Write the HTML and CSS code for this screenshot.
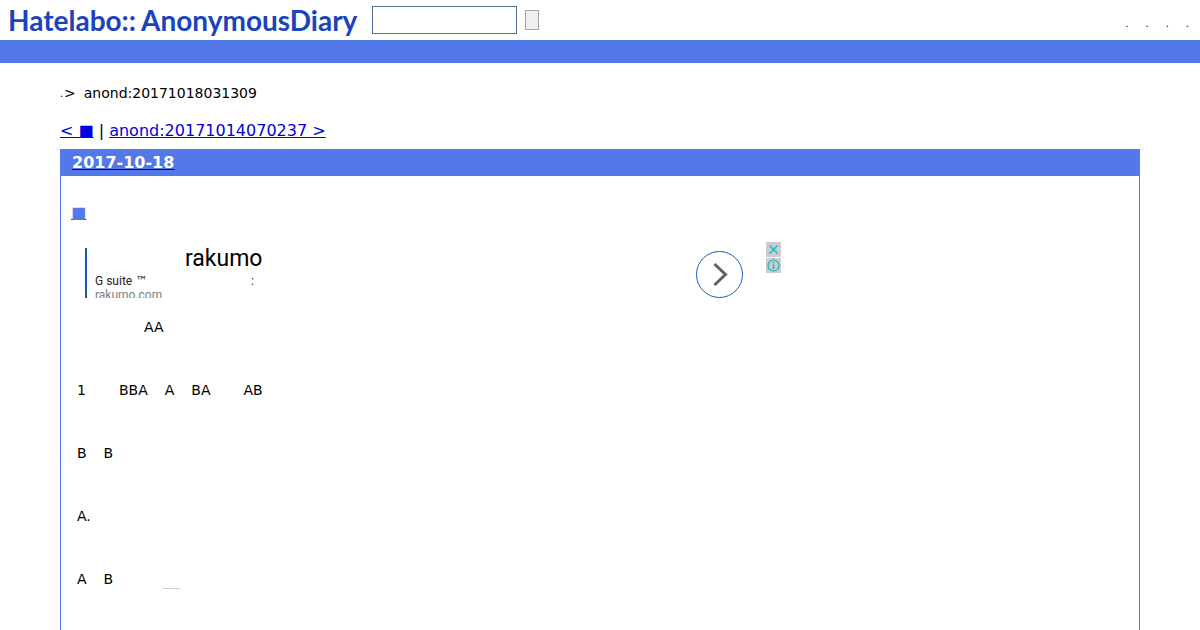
FILE: index.html
```html
<!DOCTYPE html>
<html lang="en">
<head>
<meta charset="utf-8">
<title>Hatelabo::AnonymousDiary</title>
<link rel="stylesheet" href="styles.css">
</head>
<body>
<header class="header">
  <h1 class="logo"><span>Hatelabo::</span><span>AnonymousDiary</span></h1>
  <form class="search">
    <input class="search-box" type="text" aria-label="Search">
    <button class="search-button" type="button" aria-label="Submit search"></button>
  </form>
  <div class="menu"><span>.</span><span>.</span><span>.</span><span>.</span></div>
</header>
<div class="bar"></div>
<main class="main">
  <div class="crumbs"><span class="dot">.</span><span>&gt;</span><span class="current">anond:20171018031309</span></div>
  <nav class="pager"><a href="#prev">&lt; ■</a> | <a href="#next">anond:20171014070237 &gt;</a></nav>
  <article class="day">
    <h2 class="date"><a href="#day">2017-10-18</a></h2>
    <div class="body">
      <h3 class="mark"><a href="#entry">■</a></h3>
      <div class="ad">
        <div class="ad-text">
          <div class="ad-title">rakumo</div>
          <div class="ad-line"><span>G suite <span class="tm">™</span></span><span>:</span></div>
          <div class="ad-site">rakumo.com</div>
        </div>
        <a class="ad-go" href="#ad" aria-label="Open">
          <svg width="47" height="47" viewBox="0 0 47 47" fill="none"><circle cx="23.5" cy="23.5" r="23" stroke="#175ebc"/><path d="M18.5 13 29.5 23.5 18.5 34" stroke="#616161" stroke-width="3"/></svg>
        </a>
        <div class="ad-marks">
          <button type="button" aria-label="Close"><svg width="15" height="15" viewBox="0 0 15 15" fill="none" stroke="#16b0cb" stroke-width="1.2"><path d="m3.5 3.5 8 8m0-8-8 8"/></svg></button>
          <button type="button" aria-label="Ad information"><svg width="15" height="15" viewBox="0 0 15 15" fill="none" stroke="#16b0cb" stroke-width="1.2"><circle cx="7.5" cy="7.5" r="5.5"/><path d="M7.5 6.5v4.5M7.5 4v1.3" stroke-width="1.5"/></svg></button>
        </div>
      </div>
      <div class="lines">
        <p class="line"><span class="far">AA</span></p>
        <p class="line"><span>1</span><span class="wide">BBA</span><span>A</span><span>BA</span><span class="wide">AB</span></p>
        <p class="line"><span>B</span><span>B</span></p>
        <p class="line"><span>A.</span></p>
        <p class="line"><span>A</span><span>B</span><span class="rule"></span></p>
      </div>
    </div>
  </article>
</main>
</body>
</html>
```
FILE: styles.css
```css
* { box-sizing: border-box; }
body { margin: 0; min-height: 100vh; background: #fff; color: #000; font: 14px/20px "DejaVu Sans", sans-serif; display: flex; flex-direction: column; }
h1, h2, h3, p { margin: 0; }
a { color: #0000e0; }
.header { display: flex; align-items: center; height: 40px; padding: 0 11px 0 8px; flex: none; }
.logo { display: flex; gap: 5px; color: #1b43bb; font: 700 28px/38px Lato, sans-serif; }
.search { display: flex; align-items: center; gap: 8px; margin-left: 15px; }
.search-box { width: 145px; height: 28px; border: 1px solid #527193; background: #fff; padding: 2px 4px; }
.search-button { width: 14px; height: 20px; padding: 0; border: 1px solid #a3a3a3; background: #efefef; }
.menu { display: flex; gap: 17px; margin: 8px 0 0 auto; font-size: 10px; }
.bar { height: 23px; background: #5279e7; flex: none; }
.main { padding: 20px 60px 0; flex: 1; display: flex; flex-direction: column; }
.crumbs { display: flex; height: 20px; }
.dot { font-size: 10px; width: 4px; line-height: 22px; }
.current { margin-left: 8px; }
.pager { margin: 16px 0 7px; font-size: 16px; line-height: 23px; }
.day { border: 1px solid #5279e7; border-bottom: 0; flex: 1; }
.date { background: #5279e7; padding: 0 11px; font-size: 16px; line-height: 26px; }
.date a { color: #fff; text-decoration-color: #0000cc; }
.body { padding: 24px 10px 0; }
.mark { font-size: 16px; font-weight: 400; line-height: 25px; }
.mark a { color: #5279e7; text-decoration-color: #22228c; }
.ad { display: flex; align-items: flex-start; width: 710px; margin-top: 17px; font-family: Roboto, sans-serif; }
.ad-text { width: 611px; height: 50px; margin: 6px 0 0 14px; border-left: 2px solid #175ba8; padding-left: 8px; overflow: hidden; }
.ad-title { padding-left: 90px; font-size: 23px; line-height: 22px; }
.ad-line { display: flex; justify-content: space-between; width: 159px; margin-top: 4px; font-size: 12px; line-height: 14px; color: #222; }
.tm { font-family: "DejaVu Sans", sans-serif; line-height: 1; }
.ad-site { font-size: 12px; line-height: 14px; color: #808080; }
.ad-go { height: 47px; margin-top: 9px; }
.ad-go svg, .ad-marks svg { display: block; }
.ad-marks { display: flex; flex-direction: column; gap: 1px; margin-left: auto; }
.ad-marks button { padding: 0; border: 0; background: #ccc; }
.lines { display: flex; flex-direction: column; gap: 43px; margin-top: 19px; }
.line { display: flex; gap: 17px; padding-left: 6px; }
.wide { margin-left: 16px; }
.far { margin-left: 67px; }
.rule { width: 17px; height: 20px; margin-left: 33px; border-bottom: 1px solid #ccc; }
```
